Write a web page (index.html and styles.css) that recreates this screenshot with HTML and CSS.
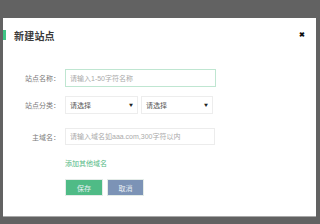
FILE: index.html
```html
<!DOCTYPE html>
<html lang="zh-CN">
<head>
    <meta charset="UTF-8" />
    <title>新建站点</title>
    <link rel="stylesheet" href="styles.css">
</head>
<body>

    <div class="dialog">

        <!-- Header -->
        <div class="head">
            <span class="mark"></span>
            <h1>新建站点</h1>
            <span class="close">&#10006;</span>
        </div>

        <!-- Form -->
        <div class="form">
            <div class="row row-name">
                <label>站点名称：</label>
                <input class="field focus" type="text" placeholder="请输入1-50字符名称">
            </div>
            <div class="row row-type">
                <label>站点分类：</label>
                <div class="select sel-1"><span>请选择</span><i>&#9660;</i></div>
                <div class="select sel-2"><span>请选择</span><i>&#9660;</i></div>
            </div>
            <div class="row row-domain">
                <label>主域名：</label>
                <input class="field" type="text" placeholder="请输入域名如aaa.com,300字符以内">
            </div>
            <div class="row row-link">
                <label></label>
                <a class="add" href="#">添加其他域名</a>
            </div>
            <div class="row row-btns">
                <label></label>
                <button class="btn save">保存</button>
                <button class="btn cancel">取消</button>
            </div>
        </div>

    </div>

</body>
</html>
```

FILE: styles.css
```css
body {
    margin: 0;
    padding: 18px 4px 0 3px;
    height: 224px;
    box-sizing: border-box;
    background: #626262;
    font-family: "Liberation Sans", "Noto Sans CJK SC", sans-serif;
}

.dialog {
    height: 198px;
    background: #fff;
    border-bottom: 1px solid #a8a8a8;
}

/* Header */
.head {
    display: flex;
    align-items: center;
    height: 34px;
}

.mark {
    width: 3px;
    height: 10px;
    background: #3ec484;
}

h1 {
    margin: 0 0 0 8px;
    font-size: 10px;
    font-weight: bold;
    color: #3a3a3a;
    letter-spacing: 0.2px;
}

.close {
    margin-left: auto;
    margin-right: 11px;
    font-size: 7px;
    font-weight: bold;
    color: #111;
}

/* Form */
.form {
    padding-top: 17px;
}

.row {
    display: flex;
    align-items: center;
}

.row label {
    width: 57px;
    margin-right: 5px;
    text-align: right;
    font-size: 7px;
    color: #7a7a7a;
    font-family: "Noto Sans CJK SC", sans-serif;
}

.field {
    box-sizing: border-box;
    height: 18px;
    padding: 0 4px;
    border: 1px solid #ececec;
    outline: none;
    font-size: 7px;
    font-family: "Liberation Sans", "Noto Sans CJK SC", sans-serif;
}

.field::placeholder {
    color: #aaa;
}

.field.focus {
    width: 151px;
    border-color: #bfe6d1;
}

.row-type {
    margin-top: 9px;
}

.select {
    box-sizing: border-box;
    display: flex;
    align-items: center;
    justify-content: space-between;
    height: 18px;
    padding: 0 4px;
    border: 1px solid #ededed;
    font-size: 7px;
    color: #555;
    font-family: "Noto Sans CJK SC", sans-serif;
}

.select i {
    font-style: normal;
    font-size: 4px;
    color: #222;
}

.sel-1 {
    width: 73px;
    margin-right: 3px;
}

.sel-2 {
    width: 72px;
}

.row-domain {
    margin-top: 14px;
}

.row-domain .field {
    width: 150px;
    height: 17px;
}

.row-link {
    margin-top: 13px;
}

.add {
    font-size: 7px;
    color: #55b985;
    text-decoration: none;
    font-family: "Noto Sans CJK SC", sans-serif;
}

.row-btns {
    margin-top: 11px;
}

.btn {
    box-sizing: border-box;
    height: 17px;
    padding: 0;
    border: 1px solid #e4ece8;
    font-size: 7px;
    color: #e8eef4;
    font-family: "Noto Sans CJK SC", sans-serif;
}

.save {
    width: 38px;
    margin-right: 4px;
    background: #4fbb86;
}

.cancel {
    width: 37px;
    background: #7c93b6;
}
```
